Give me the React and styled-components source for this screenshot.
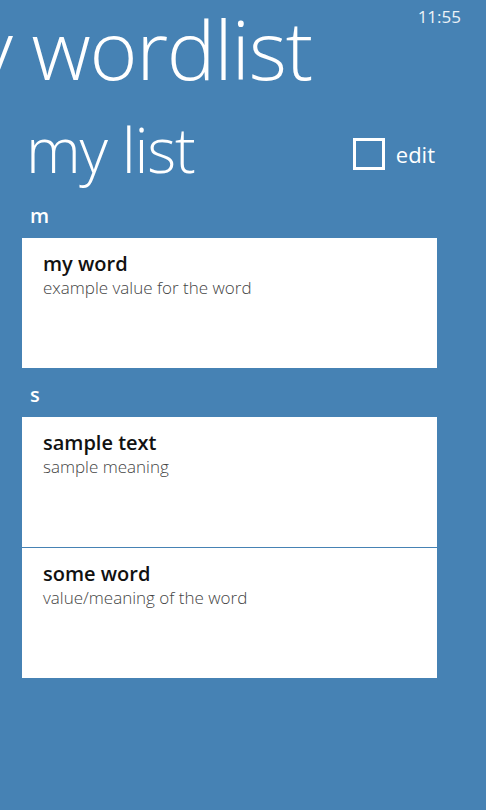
import React from "react";
import styled, { createGlobalStyle } from "styled-components";

const Global = createGlobalStyle`
  html, body { margin: 0; padding: 0; background: #4682b4; }
  body { font-family: "Open Sans", "Noto Sans", sans-serif; color: #fff; }
`;

const Page = styled.div`
  width: 486px;
  height: 810px;
  overflow: hidden;
  background: #4682b4;
  display: flex;
  flex-direction: column;
`;

const TopBar = styled.div`
  display: flex;
  justify-content: space-between;
  align-items: flex-start;
  padding: 7px 25px 0 0;
  white-space: nowrap;
`;

const AppTitle = styled.h1`
  margin: 0 0 0 -96px;
  font-size: 82px;
  line-height: 82px;
  font-weight: 300;
  letter-spacing: -1.3px;
`;

const Clock = styled.div`
  font-size: 17px;
  line-height: 20px;
  font-weight: 400;
  opacity: 0.9;
`;

const Content = styled.div`
  padding: 25px 49px 0 22px;
  display: flex;
  flex-direction: column;
`;

const PageHeader = styled.div`
  display: flex;
  justify-content: space-between;
  align-items: flex-start;
  height: 66px;
`;

const PageTitle = styled.h2`
  margin: 2px 0 0 4px;
  font-size: 62px;
  line-height: 66px;
  font-weight: 300;
  letter-spacing: -1.2px;
`;

const EditToggle = styled.label`
  display: flex;
  align-items: center;
  gap: 11px;
  margin: 24px 2px 0 0;
  font-size: 22px;
  line-height: 32px;
  font-weight: 400;
`;

const Box = styled.span`
  width: 32px;
  height: 32px;
  box-sizing: border-box;
  border: 3px solid #fff;
`;

const List = styled.div`
  margin-top: 24px;
  display: flex;
  flex-direction: column;
`;

const Group = styled.section`
  display: flex;
  flex-direction: column;
  & + & { margin-top: 15px; }
`;

const GroupHeader = styled.div`
  padding-left: 8px;
  font-size: 20px;
  line-height: 24px;
  font-weight: 600;
  margin-bottom: 10px;
`;

const Cards = styled.div`
  display: flex;
  flex-direction: column;
  gap: 1px;
`;

const Card = styled.div`
  height: 130px;
  box-sizing: border-box;
  background: #fff;
  padding: 14px 21px 0;
  color: #000;
`;

const Word = styled.div`
  font-size: 20px;
  line-height: 24px;
  font-weight: 600;
  color: #111;
`;

const Meaning = styled.div`
  margin-top: 1px;
  font-size: 17px;
  line-height: 21px;
  font-weight: 300;
  color: #444;
`;

const groups = [
  { key: "m", items: [{ w: "my word", m: "example value for the word" }] },
  {
    key: "s",
    items: [
      { w: "sample text", m: "sample meaning" },
      { w: "some word", m: "value/meaning of the word" },
    ],
  },
];

export default function App() {
  return (
    <Page>
      <Global />
      <TopBar>
        <AppTitle>my wordlist</AppTitle>
        <Clock>11:55</Clock>
      </TopBar>
      <Content>
        <PageHeader>
          <PageTitle>my list</PageTitle>
          <EditToggle>
            <Box />
            edit
          </EditToggle>
        </PageHeader>
        <List>
          {groups.map((g) => (
            <Group key={g.key}>
              <GroupHeader>{g.key}</GroupHeader>
              <Cards>
                {g.items.map((it) => (
                  <Card key={it.w}>
                    <Word>{it.w}</Word>
                    <Meaning>{it.m}</Meaning>
                  </Card>
                ))}
              </Cards>
            </Group>
          ))}
        </List>
      </Content>
    </Page>
  );
}
